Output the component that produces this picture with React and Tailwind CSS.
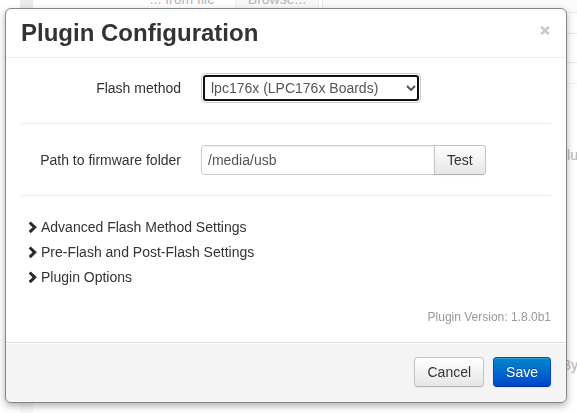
import React from "react";

const button =
  "h-[30px] border border-[#c5c5c5] border-b-[#b3b3b3] bg-linear-to-b from-white to-[#e6e6e6] px-3 text-sm leading-5 text-[#333] shadow-[inset_0_1px_0_rgba(255,255,255,0.2),0_1px_2px_rgba(0,0,0,0.05)]";

const sections = [
  "Advanced Flash Method Settings",
  "Pre-Flash and Post-Flash Settings",
  "Plugin Options",
];

function Chevron() {
  return (
    <svg viewBox="0 0 9 13" className="h-[13px] w-[9px] shrink-0" aria-hidden="true">
      <path d="M1.7 1.5 L6.7 6.3 L1.7 11.1" fill="none" stroke="#2a2a2a" strokeWidth="3" />
    </svg>
  );
}

function Divider() {
  return <hr className="my-5 h-[2px] border-0 border-t border-[#eee]" />;
}

function Backdrop() {
  return (
    <div className="flex h-screen overflow-hidden bg-[#fefefe] pl-5 text-sm leading-5 text-[#b5b5b5]" aria-hidden="true">
      <div className="flex w-[13px] shrink-0 flex-col bg-[#ebebeb]">
        <div className="mt-auto h-5 bg-[#f6f6f6]" />
      </div>
      <div className="-mt-[11px] flex w-[286px] shrink-0 items-start justify-end">
        <span className="pr-5">... from file</span>
        <span className="h-5 w-[84px] border-x border-[#eee] bg-[#f7f7f7] text-center">Browse...</span>
      </div>
      <div className="ml-[3px] flex grow flex-col text-right">
        <div className="h-[13px] border-b border-l border-[#e8e8e8] bg-[#fafafa]" />
        <div className="h-[21px] border-b border-[#e8e8e8]" />
        <div className="h-[29px] border-b border-[#e8e8e8]" />
        <div className="h-[21px] border-b border-[#f2f2f2]" />
        <div className="-mr-px pt-[61px]">plu</div>
        <div className="-mr-px pt-[190px]">By</div>
      </div>
    </div>
  );
}

export default function App() {
  return (
    <div className="font-['Liberation_Sans',Arial,sans-serif]">
      <Backdrop />
      <div
        role="dialog"
        aria-labelledby="title"
        className="fixed top-2 right-[10px] left-[5px] rounded-md border border-[#858585] bg-white text-sm leading-5 text-[#333] shadow-[0_3px_7px_rgba(0,0,0,0.3)]"
      >
        <header className="flex items-start justify-between border-b border-[#eee] py-[9px] pr-4 pl-[15px]">
          <h3 id="title" className="text-[24px] leading-[30px] font-bold">Plugin Configuration</h3>
          <button type="button" aria-label="Close" className="mt-2">
            <svg viewBox="0 0 10 9" className="block h-[9px] w-[10px]" aria-hidden="true">
              <path d="M1.2 0.9 L8.8 8.1 M8.8 0.9 L1.2 8.1" fill="none" stroke="#c8c8c8" strokeWidth="2.6" />
            </svg>
          </button>
        </header>

        <form id="settings" className="p-[15px]" onSubmit={(e) => e.preventDefault()}>
          <div className="flex items-center">
            <label htmlFor="method" className="w-40 shrink-0 text-right">Flash method</label>
            <div className="relative ml-5 w-[220px] rounded border border-[#ccc] bg-white p-px">
              <select
                id="method"
                className="block h-[26px] w-full appearance-none rounded-[3px] border-2 border-[#101010] bg-white pl-[6px] text-[#555] outline-none"
              >
                <option>lpc176x (LPC176x Boards)</option>
              </select>
              <svg viewBox="0 0 10 6" className="pointer-events-none absolute top-[11px] right-1 h-[6px] w-[10px]" aria-hidden="true">
                <path d="M1 1 L5 5 L9 1" fill="none" stroke="#555" strokeWidth="2" />
              </svg>
            </div>
          </div>
          <Divider />
          <div className="flex items-center">
            <label htmlFor="path" className="w-40 shrink-0 text-right">Path to firmware folder</label>
            <input
              id="path"
              type="text"
              defaultValue="/media/usb"
              className="ml-5 h-[30px] w-[234px] rounded-l border border-[#ccc] bg-white px-[6px] text-[#555] shadow-[inset_0_1px_1px_rgba(0,0,0,0.05)]"
            />
            <button type="button" className={button + " -ml-px rounded-r"}>Test</button>
          </div>
          <Divider />
          <div className="flex flex-col items-start gap-[5px] pl-[7px]">
            {sections.map((name) => (
              <button key={name} type="button" className="flex items-center gap-1 leading-5">
                <Chevron />
                {name}
              </button>
            ))}
          </div>
          <p className="mt-5 text-right text-xs leading-5 text-[#999]">Plugin Version: 1.8.0b1</p>
        </form>

        <footer className="flex justify-end gap-[9px] rounded-b-md border-t border-[#ddd] bg-[#f4f4f4] px-[15px] pt-[14px] pb-[15px] shadow-[inset_0_1px_0_#fff]">
          <button type="button" className={button + " rounded"}>Cancel</button>
          <button
            type="submit"
            form="settings"
            className="h-[30px] rounded border border-[#0044cc] border-b-[#003399] bg-linear-to-b from-[#0088cc] to-[#0044cc] px-3 text-sm leading-5 text-white shadow-[inset_0_1px_0_rgba(255,255,255,0.2),0_1px_2px_rgba(0,0,0,0.05)] text-shadow-[0_-1px_0_rgba(0,0,0,0.25)]"
          >
            Save
          </button>
        </footer>
      </div>
    </div>
  );
}
